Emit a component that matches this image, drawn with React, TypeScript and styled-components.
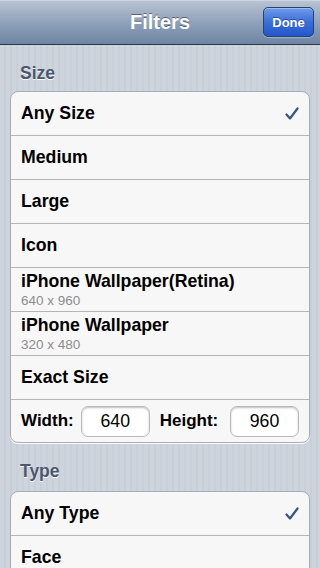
import styled, { createGlobalStyle } from "styled-components";

const GlobalStyle = createGlobalStyle`
  html, body {
    margin: 0;
    padding: 0;
  }
  body {
    font-family: "Liberation Sans", Arial, sans-serif;
    background: #c8cfd8;
  }
`;

const Screen = styled.div`
  width: 320px;
  height: 568px;
  overflow: hidden;
  background-color: #cbd2da;
  background-image: repeating-linear-gradient(
    90deg,
    #cdd4dc 0px,
    #cdd4dc 4px,
    #c8cfd8 4px,
    #c8cfd8 6px
  );
`;

const NavBar = styled.div`
  position: relative;
  height: 43px;
  display: flex;
  align-items: center;
  justify-content: center;
  background: linear-gradient(#b8c3d2, #8fa1ba 50%, #6f85a3);
  border-top: 1px solid #cdd5df;
  border-bottom: 1px solid #2d3642;
`;

const NavTitle = styled.h1`
  margin: 0;
  font-size: 20px;
  font-weight: bold;
  color: #fff;
  text-shadow: 0 -1px 0 rgba(0, 0, 0, 0.45);
`;

const DoneButton = styled.button`
  position: absolute;
  right: 6px;
  top: 6px;
  width: 51px;
  height: 30px;
  border-radius: 5px;
  border: 1px solid #26426f;
  background: linear-gradient(#6e9be8, #3b6fd8 50%, #2456cc);
  box-shadow: inset 0 1px 0 rgba(255, 255, 255, 0.35), 0 1px 0 rgba(255, 255, 255, 0.3);
  color: #fff;
  font-family: "Liberation Sans", Arial, sans-serif;
  font-size: 13px;
  font-weight: bold;
  text-shadow: 0 -1px 0 rgba(0, 0, 0, 0.4);
  padding: 0;
`;

const Content = styled.div`
  padding: 0 10px;
`;

const SectionHeader = styled.div<{ $top: number; $height: number }>`
  padding: ${(p) => p.$top}px 10px 0;
  height: ${(p) => p.$height}px;
  font-size: 17.5px;
  font-weight: bold;
  color: #4c566c;
  text-shadow: 0 1px 0 #fff;
`;

const Group = styled.div`
  background: #f7f7f7;
  border: 1px solid #a8abae;
  border-radius: 8px;
  overflow: hidden;
  box-shadow: 0 1px 0 #fff;
`;

const Row = styled.div`
  height: 43px;
  display: flex;
  align-items: center;
  justify-content: space-between;
  padding: 0 10px;
  border-top: 1px solid #b5b5b5;

  &:first-child {
    border-top: none;
  }
`;

const RowText = styled.div`
  display: flex;
  flex-direction: column;
`;

const Label = styled.span`
  font-size: 17.7px;
  font-weight: bold;
  color: #000;
`;

const Detail = styled.span`
  font-size: 13.5px;
  color: #8d8d8d;
  margin-top: 1px;
`;

const Check = styled.svg`
  width: 14px;
  height: 14px;
`;

const InputRow = styled(Row)`
  justify-content: flex-start;
  height: 42px;
`;

const FieldLabel = styled.span`
  font-size: 17px;
  font-weight: bold;
  color: #000;
  margin-right: 7px;
`;

const Field = styled.div`
  width: 67px;
  height: 29px;
  border: 1px solid #b9b9b9;
  border-radius: 7px;
  background: #fff;
  box-shadow: inset 0 1px 2px rgba(0, 0, 0, 0.25);
  display: flex;
  align-items: center;
  justify-content: center;
  font-size: 17.7px;
  color: #000;
  margin-right: 10px;

  &:last-child {
    margin-right: 0;
    margin-left: auto;
  }
`;

type Option = { label: string; detail?: string; checked?: boolean };

const sizes: Option[] = [
  { label: "Any Size", checked: true },
  { label: "Medium" },
  { label: "Large" },
  { label: "Icon" },
  { label: "iPhone Wallpaper(Retina)", detail: "640 x 960" },
  { label: "iPhone Wallpaper", detail: "320 x 480" },
  { label: "Exact Size" },
];

const types: Option[] = [{ label: "Any Type", checked: true }, { label: "Face" }];

const CheckMark = () => (
  <Check viewBox="0 0 14 14">
    <path
      d="M1.5 7.5 L5 11.5 L12.5 1.5"
      fill="none"
      stroke="#385487"
      strokeWidth="2.2"
      strokeLinecap="round"
      strokeLinejoin="round"
    />
  </Check>
);

const OptionRow = ({ option }: { option: Option }) => (
  <Row>
    <RowText>
      <Label>{option.label}</Label>
      {option.detail && <Detail>{option.detail}</Detail>}
    </RowText>
    {option.checked && <CheckMark />}
  </Row>
);

export default function App() {
  return (
    <>
      <GlobalStyle />
      <Screen>
        <NavBar>
          <NavTitle>Filters</NavTitle>
          <DoneButton>Done</DoneButton>
        </NavBar>
        <Content>
          <SectionHeader $top={18} $height={28}>
            Size
          </SectionHeader>
          <Group>
            {sizes.map((o) => (
              <OptionRow key={o.label} option={o} />
            ))}
            <InputRow>
              <FieldLabel>Width:</FieldLabel>
              <Field>640</Field>
              <FieldLabel>Height:</FieldLabel>
              <Field>960</Field>
            </InputRow>
          </Group>
          <SectionHeader $top={18} $height={30}>
            Type
          </SectionHeader>
          <Group>
            {types.map((o) => (
              <OptionRow key={o.label} option={o} />
            ))}
          </Group>
        </Content>
      </Screen>
    </>
  );
}
